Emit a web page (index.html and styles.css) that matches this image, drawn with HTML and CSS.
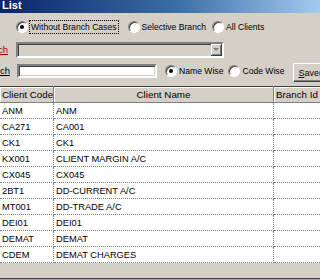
FILE: index.html
```html
<!DOCTYPE html>
<html lang="en">
<head>
    <meta charset="UTF-8">
    <title>Client List</title>
    <link rel="stylesheet" href="styles.css">
</head>
<body>

<div class="titlebar">List</div>

<div class="options">
    <label class="radio"><span class="dot checked"></span><span class="focus">Without Branch Cases</span></label>
    <label class="radio opt-selective"><span class="dot"></span>Selective Branch</label>
    <label class="radio opt-all"><span class="dot"></span>All Clients</label>
</div>

<div class="form-row branch-row">
    <div class="label label-branch"><span><u>Branch</u></span></div>
    <div class="combo">
        <div class="combo-btn"><span class="arrow"></span></div>
    </div>
</div>

<div class="form-row search-row">
    <div class="label label-search"><span><u>Search</u></span></div>
    <div class="textbox"></div>
    <label class="radio opt-name"><span class="dot checked"></span>Name Wise</label>
    <label class="radio opt-code"><span class="dot"></span>Code Wise</label>
    <button class="btn"><u>S</u>ave(F2)</button>
</div>

<table class="grid">
    <thead>
        <tr>
            <th class="col-code">Client Code</th>
            <th class="col-name">Client Name</th>
            <th class="col-branch">Branch Id</th>
        </tr>
    </thead>
    <tbody>
        <tr><td>ANM</td><td>ANM</td><td></td></tr>
        <tr><td>CA271</td><td>CA001</td><td></td></tr>
        <tr><td>CK1</td><td>CK1</td><td></td></tr>
        <tr><td>KX001</td><td>CLIENT MARGIN A/C</td><td></td></tr>
        <tr><td>CX045</td><td>CX045</td><td></td></tr>
        <tr><td>2BT1</td><td>DD-CURRENT A/C</td><td></td></tr>
        <tr><td>MT001</td><td>DD-TRADE A/C</td><td></td></tr>
        <tr><td>DEI01</td><td>DEI01</td><td></td></tr>
        <tr><td>DEMAT</td><td>DEMAT</td><td></td></tr>
        <tr><td>CDEM</td><td>DEMAT CHARGES</td><td></td></tr>
    </tbody>
</table>

<div class="statusbar"></div>

</body>
</html>
```

FILE: styles.css
```css
body {
    margin: 0;
    width: 320px;
    height: 280px;
    overflow: hidden;
    background-color: #d4d0c8;
    font-family: "Liberation Sans", Arial, sans-serif;
    font-size: 8.6px;
    color: #000;
}
.titlebar {
    height: 13px;
    line-height: 10px;
    padding-left: 2px;
    background: linear-gradient(to right, #0a246a, #3a6ea5 55%, #a6caf0);
    color: #fff;
    font-weight: bold;
    font-size: 11px;
    overflow: hidden;
}
.options {
    display: flex;
    align-items: center;
    height: 14px;
    margin-top: 7px;
    padding-left: 16px;
}
.radio {
    display: flex;
    align-items: center;
    white-space: nowrap;
}
.dot {
    width: 10px;
    height: 10px;
    margin-right: 2px;
    border-radius: 50%;
    border: 1px solid;
    border-color: #808080 #fff #fff #808080;
    background-color: #fff;
    box-shadow: inset 1px 1px 0 #404040;
    position: relative;
    flex: none;
}
.dot.checked::after {
    content: "";
    position: absolute;
    left: 3px;
    top: 3px;
    width: 4px;
    height: 4px;
    border-radius: 50%;
    background-color: #000;
}
.focus {
    outline: 1px dotted #000;
    padding: 1px 1px;
}
.opt-selective {
    margin-left: 10px;
}
.opt-all {
    margin-left: 6px;
}
.form-row {
    display: flex;
    align-items: flex-start;
}
.branch-row {
    margin-top: 8px;
    height: 16px;
}
.search-row {
    margin-top: 6px;
    height: 18px;
}
.label {
    display: flex;
    justify-content: flex-end;
    overflow: hidden;
    white-space: nowrap;
    height: 14px;
    line-height: 14px;
    font-size: 9.5px;
    flex: none;
}
.label-branch {
    width: 8px;
    margin-right: 8px;
    margin-top: 1px;
    color: #a00000;
}
.label-search {
    width: 10px;
    margin-right: 7px;
}
.combo {
    width: 204px;
    height: 12px;
    border: 2px solid;
    border-color: #808080 #fff #fff #808080;
    box-shadow: inset 1px 1px 0 #404040, inset -1px -1px 0 #d4d0c8;
    background-color: #d4d0c8;
    display: flex;
    justify-content: flex-end;
}
.combo-btn {
    box-sizing: border-box;
    width: 11px;
    height: 12px;
    border-right: 1px solid #404040;
    border-bottom: 1px solid #404040;
    box-shadow: inset 1px 1px 0 #fff, inset -1px -1px 0 #808080;
    display: flex;
    align-items: center;
    justify-content: center;
}
.arrow {
    width: 0;
    height: 0;
    border-left: 3px solid transparent;
    border-right: 3px solid transparent;
    border-top: 3px solid #808080;
}
.textbox {
    width: 136px;
    height: 10px;
    border: 2px solid;
    border-color: #808080 #fff #fff #808080;
    box-shadow: inset 1px 1px 0 #404040, inset -1px -1px 0 #d4d0c8;
    background-color: #fff;
    flex: none;
}
.opt-name {
    margin-left: 8px;
    height: 14px;
}
.opt-code {
    margin-left: 5px;
    height: 14px;
}
.btn {
    margin-left: 9px;
    margin-top: -1px;
    width: 60px;
    height: 19px;
    padding: 0 0 0 4px;
    text-align: left;
    font-family: inherit;
    font-size: 9px;
    background-color: #d4d0c8;
    border: 1px solid;
    border-color: #fff #404040 #404040 #fff;
    box-shadow: inset -1px -1px 0 #808080;
    flex: none;
}
.grid {
    margin-top: 4px;
    width: 360px;
    border-collapse: collapse;
    table-layout: fixed;
    background-color: #fff;
    font-size: 9.3px;
}
.grid th {
    height: 15px;
    padding: 0 2px;
    background-color: #d4d0c8;
    font-weight: normal;
    text-align: left;
    border-top: 1px solid #404040;
    border-bottom: 1px solid #808080;
    border-right: 1px solid #808080;
    box-shadow: inset 1px 1px 0 #fff;
    white-space: nowrap;
    font-size: 9.8px;
}
.grid th.col-name {
    text-align: center;
}
.col-code {
    width: 49px;
}
.col-name {
    width: 215px;
}
.grid td {
    height: 15px;
    padding: 0 2px;
    border-bottom: 1px dotted #808080;
    border-right: 1px dotted #808080;
    white-space: nowrap;
    overflow: hidden;
}
.statusbar {
    margin-top: 15px;
    height: 4px;
    border-top: 1px solid #404040;
    background-color: #a0a0b0;
}
```
